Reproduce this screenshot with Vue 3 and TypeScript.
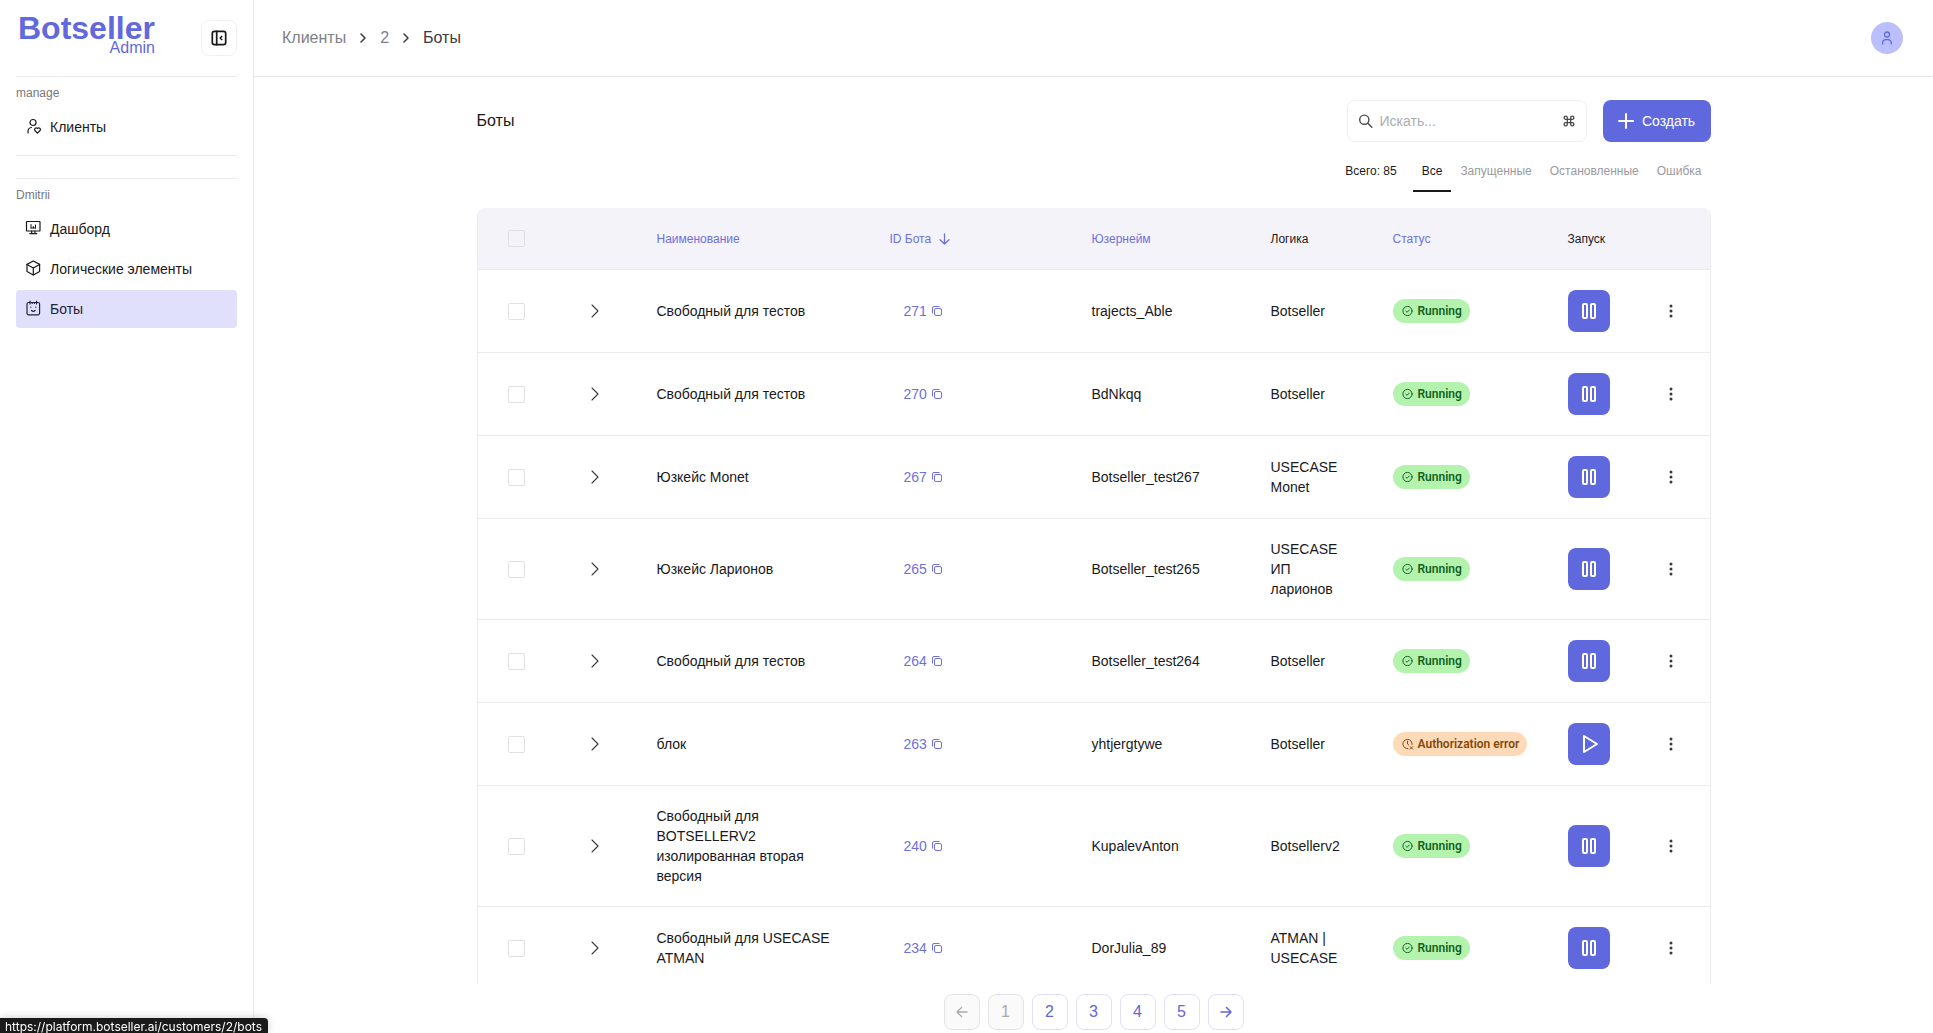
<script setup lang="ts">
import { ref } from 'vue'

interface Bot {
  id: number
  name: string
  username: string
  logic: string
  running: boolean
}

const bots: Bot[] = [
  { id: 271, name: 'Свободный для тестов', username: 'trajects_Able', logic: 'Botseller', running: true },
  { id: 270, name: 'Свободный для тестов', username: 'BdNkqq', logic: 'Botseller', running: true },
  { id: 267, name: 'Юзкейс Monet', username: 'Botseller_test267', logic: 'USECASE Monet', running: true },
  { id: 265, name: 'Юзкейс Ларионов', username: 'Botseller_test265', logic: 'USECASE ИП ларионов', running: true },
  { id: 264, name: 'Свободный для тестов', username: 'Botseller_test264', logic: 'Botseller', running: true },
  { id: 263, name: 'блок', username: 'yhtjergtywe', logic: 'Botseller', running: false },
  { id: 240, name: 'Свободный для BOTSELLERV2 изолированная вторая версия', username: 'KupalevAnton', logic: 'Botsellerv2', running: true },
  { id: 234, name: 'Свободный для USECASE ATMAN', username: 'DorJulia_89', logic: 'ATMAN | USECASE', running: true },
]

const filters = ['Все', 'Запущенные', 'Остановленные', 'Ошибка']
const activeFilter = ref('Все')
const query = ref('')
const page = ref(1)
const pages = [1, 2, 3, 4, 5]
</script>

<template>
  <div class="app">
    <aside class="sidebar">
      <div class="brand">
        <a class="logo" href="#">
          <span class="logo-name">Botseller</span>
          <span class="logo-sub">Admin</span>
        </a>
        <button class="collapse" type="button" aria-label="Свернуть меню">
          <svg width="18" height="18" viewBox="0 0 18 18" fill="none" stroke="currentColor" stroke-width="1.700" stroke-linecap="round" stroke-linejoin="round">
            <rect x="2.300" y="2.300" width="13.400" height="13.400" rx="2.200" />
            <path d="M6.700 2.300v13.400" />
            <path d="M11.700 7.500 10.200 9l1.500 1.500" />
          </svg>
        </button>
      </div>

      <nav class="group">
        <p class="group-label">manage</p>
        <a class="nav-item" href="#">
          <svg width="18" height="18" viewBox="0 0 18 18" fill="none" stroke="currentColor" stroke-width="1.200" stroke-linecap="round" stroke-linejoin="round">
            <circle cx="8" cy="4.500" r="3" />
            <path d="M3 15v-1.500a4 4 0 0 1 3.500-4" />
            <path d="M12.500 15.200 9.900 12.500a1.600 1.600 0 0 1 2.600-2 1.600 1.600 0 0 1 2.600 2z" />
          </svg>
          <span>Клиенты</span>
        </a>
      </nav>

      <nav class="group">
        <p class="group-label">Dmitrii</p>
        <a class="nav-item" href="#">
          <svg width="18" height="18" viewBox="0 0 18 18" fill="none" stroke="currentColor" stroke-width="1.200" stroke-linecap="round" stroke-linejoin="round">
            <rect x="1.500" y="1.500" width="13.500" height="9.500" rx="0.600" />
            <path d="M6.700 11v2.600M10 11v2.600M4.800 13.600h7" />
            <path d="M6 4.500v3.500M8.300 6.500v1.500M10.500 5v3M6 8h4.500" stroke-width="1" />
          </svg>
          <span>Дашборд</span>
        </a>
        <a class="nav-item" href="#">
          <svg width="18" height="18" viewBox="0 0 18 18" fill="none" stroke="currentColor" stroke-width="1.200" stroke-linecap="round" stroke-linejoin="round">
            <path d="M8.300 1 14.600 4.400v7L8.300 14.900 2 11.400v-7z" />
            <path d="M2 4.400l6.300 3.500 6.300-3.500M8.300 7.900v7" />
          </svg>
          <span>Логические элементы</span>
        </a>
        <a class="nav-item active" href="#" aria-current="page">
          <svg width="18" height="18" viewBox="0 0 18 18" fill="none" stroke="currentColor" stroke-width="1.200" stroke-linecap="round" stroke-linejoin="round">
            <rect x="2" y="2.500" width="12.600" height="12.300" rx="1.500" />
            <path d="M5 1v3M11.500 1v3M7.200 2.500v1M9.400 2.500v1" />
            <path d="M5.800 7.200h.1M10.700 7.200h.1M6.500 10.500q1.800 1.600 3.600 0" />
          </svg>
          <span>Боты</span>
        </a>
      </nav>
    </aside>

    <div class="main">
      <header class="topbar">
        <nav class="crumbs" aria-label="Навигация">
          <a href="#">Клиенты</a>
          <svg width="8" height="12" viewBox="0 0 8 12" fill="none" stroke="#3a3a3d" stroke-width="1.500" stroke-linecap="round" stroke-linejoin="round"><path d="M2 2l4 4-4 4" /></svg>
          <a href="#">2</a>
          <svg width="8" height="12" viewBox="0 0 8 12" fill="none" stroke="#3a3a3d" stroke-width="1.500" stroke-linecap="round" stroke-linejoin="round"><path d="M2 2l4 4-4 4" /></svg>
          <span class="current">Боты</span>
        </nav>
        <button class="avatar" type="button" aria-label="Профиль">
          <svg width="16" height="16" viewBox="0 0 16 16" fill="none" stroke="currentColor" stroke-width="1.300" stroke-linecap="round">
            <circle cx="8" cy="4.500" r="2.500" />
            <path d="M3.700 14v-1a3.300 3.300 0 0 1 3.300-3.300h2a3.300 3.300 0 0 1 3.300 3.300v1" />
          </svg>
        </button>
      </header>

      <main class="content">
        <div class="heading">
          <h1>Боты</h1>
          <div class="tools">
            <label class="search">
              <svg width="16" height="16" viewBox="0 0 16 16" fill="none" stroke="currentColor" stroke-width="1.400" stroke-linecap="round">
                <circle cx="6.300" cy="6.700" r="4.600" />
                <path d="M9.800 10.200 13.800 14.200" />
              </svg>
              <input v-model="query" type="text" placeholder="Искать..." aria-label="Искать" />
              <svg width="14" height="14" viewBox="0 0 14 14" fill="none" stroke="currentColor" stroke-width="1.300">
                <path d="M5.300 5.300H3.700A1.600 1.600 0 1 1 5.300 3.700V10.300A1.600 1.600 0 1 1 3.700 8.700H10.300A1.600 1.600 0 1 1 8.700 10.300V3.700A1.600 1.600 0 1 1 10.300 5.300H5.300" />
              </svg>
            </label>
            <button class="create" type="button">
              <svg width="16" height="16" viewBox="0 0 16 16" stroke="currentColor" stroke-width="2" stroke-linecap="round"><path d="M8 1v14M1 8h14" /></svg>
              <span>Создать</span>
            </button>
          </div>
        </div>

        <div class="filters">
          <span class="total">Всего: 85</span>
          <button
            v-for="filter in filters"
            :key="filter"
            type="button"
            class="tab"
            :class="{ active: filter === activeFilter }"
            @click="activeFilter = filter"
          >{{ filter }}</button>
        </div>

        <div class="table-wrap">
          <table>
            <colgroup>
              <col class="c-check" />
              <col class="c-expand" />
              <col class="c-name" />
              <col class="c-id" />
              <col class="c-user" />
              <col class="c-logic" />
              <col class="c-status" />
              <col class="c-launch" />
              <col class="c-menu" />
            </colgroup>
            <thead>
              <tr>
                <th class="mid"><input type="checkbox" aria-label="Выбрать все" /></th>
                <th></th>
                <th><button type="button" class="sort">Наименование</button></th>
                <th>
                  <button type="button" class="sort">
                    ID Бота
                    <svg width="12" height="12" viewBox="0 0 12 12" fill="none" stroke="currentColor" stroke-width="1.300" stroke-linecap="round" stroke-linejoin="round"><path d="M5.500 1v10M1 6.700 5.500 11 10 6.700" /></svg>
                  </button>
                </th>
                <th><button type="button" class="sort">Юзернейм</button></th>
                <th>Логика</th>
                <th><button type="button" class="sort">Статус</button></th>
                <th>Запуск</th>
                <th></th>
              </tr>
            </thead>
            <tbody>
              <tr v-for="bot in bots" :key="bot.id">
                <td class="mid"><input type="checkbox" :aria-label="'Выбрать ' + bot.id" /></td>
                <td class="mid">
                  <button type="button" class="plain" aria-label="Развернуть">
                    <svg width="10" height="16" viewBox="0 0 10 16" fill="none" stroke="currentColor" stroke-width="1.100" stroke-linecap="round" stroke-linejoin="round"><path d="M1 2l6 6-6 6" /></svg>
                  </button>
                </td>
                <td>{{ bot.name }}</td>
                <td class="id-cell">
                  <button type="button" class="copy">
                    {{ bot.id }}
                    <svg width="12" height="12" viewBox="0 0 12 12" fill="none" stroke="currentColor" stroke-width="1" stroke-linejoin="round">
                      <rect x="3.500" y="3.500" width="7" height="7" rx="1.500" />
                      <path d="M1.500 8.500V3a1.500 1.500 0 0 1 1.500-1.500h5.500" />
                    </svg>
                  </button>
                </td>
                <td>{{ bot.username }}</td>
                <td>{{ bot.logic }}</td>
                <td>
                  <span class="badge" :class="bot.running ? 'ok' : 'error'">
                    <svg v-if="bot.running" width="12" height="12" viewBox="0 0 12 12" fill="none" stroke="currentColor" stroke-width="1" stroke-linecap="round" stroke-linejoin="round">
                      <circle cx="5.500" cy="6" r="4.600" />
                      <path d="M3.900 6.200l1.200 1.100 2.200-2.300" />
                    </svg>
                    <svg v-else width="12" height="12" viewBox="0 0 12 12" fill="none" stroke="currentColor" stroke-width="1" stroke-linecap="round" stroke-linejoin="round">
                      <path d="M6 10.600A4.600 4.600 0 1 1 10.100 6.500M5.500 3.200V6l1.200 1" />
                      <path d="M8.200 8.700l2.400 2.400M10.600 8.700l-2.400 2.400" />
                    </svg>
                    {{ bot.running ? 'Running' : 'Authorization error' }}
                  </span>
                </td>
                <td>
                  <button type="button" class="launch" :aria-label="bot.running ? 'Пауза' : 'Запустить'">
                    <svg v-if="bot.running" width="18" height="18" viewBox="0 0 18 18" fill="none" stroke="currentColor" stroke-width="2">
                      <rect x="3" y="2" width="4" height="14" rx="1" />
                      <rect x="11" y="2" width="4" height="14" rx="1" />
                    </svg>
                    <svg v-else width="18" height="18" viewBox="0 0 18 18" fill="none" stroke="currentColor" stroke-width="2" stroke-linejoin="round"><path d="M4 1l13 8-13 8z" /></svg>
                  </button>
                </td>
                <td class="mid">
                  <button type="button" class="plain" aria-label="Действия">
                    <svg width="16" height="16" viewBox="0 0 16 16" fill="currentColor"><circle cx="9" cy="3" r="1.500" /><circle cx="9" cy="8" r="1.500" /><circle cx="9" cy="13" r="1.500" /></svg>
                  </button>
                </td>
              </tr>
            </tbody>
          </table>
        </div>

        <nav class="pagination" aria-label="Страницы">
          <button type="button" aria-label="Назад" :disabled="page === 1" @click="page--">
            <svg width="12" height="12" viewBox="0 0 12 12" fill="none" stroke="currentColor" stroke-width="1.300" stroke-linecap="round" stroke-linejoin="round"><path d="M11 6H1M5.500 1.500 1 6l4.500 4.500" /></svg>
          </button>
          <button v-for="n in pages" :key="n" type="button" :disabled="n === page" @click="page = n">{{ n }}</button>
          <button type="button" aria-label="Вперёд" :disabled="page === 5" @click="page++">
            <svg width="12" height="12" viewBox="0 0 12 12" fill="none" stroke="currentColor" stroke-width="1.500" stroke-linecap="round" stroke-linejoin="round"><path d="M1 6h10M6.500 1.500 11 6l-4.500 4.500" /></svg>
          </button>
        </nav>
      </main>
    </div>

    <div class="link-status">https://platform.botseller.ai/customers/2/bots</div>
  </div>
</template>

<style>
body {
  margin: 0;
  background: #fff;
}
</style>

<style scoped>
* {
  box-sizing: border-box;
}

.app {
  display: flex;
  height: 100vh;
  overflow: hidden;
  font-family: "Liberation Sans", Arial, sans-serif;
  font-size: 14px;
  line-height: 20px;
  color: #19191c;
}

svg {
  display: block;
  flex: none;
}

button {
  font: inherit;
  color: inherit;
  border: 0;
  padding: 0;
  background: none;
  cursor: pointer;
}

a {
  color: inherit;
  text-decoration: none;
}

.sidebar {
  flex: none;
  width: 254px;
  padding: 0 16px;
  border-right: 1px solid #e6e6e8;
}

.brand {
  display: flex;
  align-items: center;
  justify-content: space-between;
  height: 76px;
}

.logo {
  display: flex;
  flex-direction: column;
  align-items: flex-end;
  padding: 0 0 8px 2px;
  color: #6169dc;
}

.logo-name {
  font-size: 32px;
  font-weight: 700;
  line-height: 28px;
}

.logo-sub {
  font-size: 16px;
  line-height: 12px;
}

.collapse {
  display: grid;
  place-items: center;
  width: 36px;
  height: 36px;
  border: 1px solid #f0f0f2;
  border-radius: 8px;
}

.group {
  display: flex;
  flex-direction: column;
  gap: 2px;
  border-top: 1px solid #ebebed;
}

.group + .group {
  margin-top: 22px;
}

.group:not(:last-child) {
  padding-bottom: 9px;
  border-bottom: 1px solid #ebebed;
}

.group-label {
  margin: 0;
  padding: 8px 0 5px;
  font-size: 12px;
  line-height: 16px;
  color: #77777c;
}

.nav-item {
  display: flex;
  align-items: center;
  gap: 7px;
  height: 38px;
  padding: 0 9px;
  border-radius: 4px;
}

.nav-item.active {
  background: #e0e0fd;
  color: #23233c;
}

.main {
  flex: 1;
  min-width: 0;
  display: flex;
  flex-direction: column;
}

.topbar {
  flex: none;
  display: flex;
  align-items: center;
  justify-content: space-between;
  height: 77px;
  padding: 0 30px 0 28px;
  border-bottom: 1px solid #e6e6e8;
}

.crumbs {
  display: flex;
  align-items: center;
  gap: 13px;
  font-size: 16px;
  color: #808084;
}

.current {
  color: #3a3a3d;
}

.avatar {
  display: grid;
  place-items: center;
  width: 32px;
  height: 32px;
  border-radius: 50%;
  background: #bcbffe;
  color: #6169dc;
}

.content {
  flex: 1;
  min-height: 0;
  display: flex;
  flex-direction: column;
  width: 100%;
  max-width: 1234px;
  margin: 0 auto;
  padding-top: 23px;
}

.heading {
  display: flex;
  justify-content: space-between;
  align-items: center;
}

h1 {
  margin: 0;
  font-size: 16px;
  font-weight: 400;
}

.tools {
  display: flex;
  gap: 16px;
}

.search {
  display: flex;
  align-items: center;
  gap: 6px;
  width: 240px;
  height: 42px;
  padding: 0 10px;
  border: 1px solid #f0f0f2;
  border-radius: 8px;
  color: #4a4a4e;
}

.search input {
  flex: 1;
  min-width: 0;
  padding: 0;
  border: 0;
  outline: 0;
  background: none;
  font: inherit;
}

.search input::placeholder {
  color: #adadb1;
}

.create {
  display: flex;
  align-items: center;
  justify-content: center;
  gap: 8px;
  width: 108px;
  height: 42px;
  border-radius: 8px;
  background: #5f68dc;
  color: #fff;
}

.filters {
  display: flex;
  justify-content: flex-end;
  height: 50px;
  margin-bottom: 16px;
  font-size: 12px;
}

.total {
  padding-top: 19px;
  margin-right: 16px;
}

.tab {
  padding: 10px 9px 0;
  border-bottom: 2px solid transparent;
  color: #9a9a9e;
}

.tab.active {
  color: #19191c;
  border-color: #19191c;
}

.table-wrap {
  flex: 1;
  min-height: 0;
  overflow: auto;
  scrollbar-width: none;
  border: 1px solid #ebebed;
  border-width: 0 1px;
  border-radius: 8px 8px 0 0;
}

table {
  width: 100%;
  table-layout: fixed;
  border-collapse: separate;
  border-spacing: 0;
}

.c-check { width: 78px; }
.c-expand { width: 81px; }
.c-name { width: 233px; }
.c-id { width: 202px; }
.c-user { width: 179px; }
.c-logic { width: 122px; }
.c-status { width: 175px; }
.c-launch { width: 82px; }
.c-menu { width: 80px; }

th,
td {
  padding: 20px;
  text-align: left;
  font-weight: 400;
  border-bottom: 1px solid #ebebed;
}

th {
  height: 62px;
  font-size: 12px;
  background: #f5f3fa;
}

.sort {
  display: flex;
  align-items: center;
  gap: 8px;
  color: #6e70dc;
}

th:nth-child(8),
td:nth-child(8) {
  padding-right: 0;
}

.mid > * {
  display: block;
  margin: 0 auto;
}

input[type="checkbox"] {
  appearance: none;
  width: 17px;
  height: 17px;
  border: 1px solid #e0e0e4;
  border-radius: 2px;
}

.plain {
  color: #3a3a3d;
}

.id-cell {
  padding-left: 34px;
}

.copy {
  display: flex;
  align-items: center;
  gap: 4px;
  color: #6e70dc;
}

.badge {
  display: inline-flex;
  align-items: center;
  gap: 4px;
  height: 24px;
  padding: 0 8px 0 9px;
  border-radius: 12px;
  font-family: Roboto, sans-serif;
  font-size: 12px;
  font-weight: 600;
  white-space: nowrap;
  vertical-align: middle;
}

.ok {
  background: #b4f3ae;
  color: #126322;
}

.error {
  background: #ffdab8;
  color: #84490c;
}

.launch {
  display: grid;
  place-items: center;
  width: 42px;
  height: 42px;
  border-radius: 8px;
  background: #5f68dc;
  color: #fff;
}

.pagination {
  flex: none;
  display: flex;
  justify-content: center;
  gap: 8px;
  padding: 10px 0 3px;
}

.pagination button {
  display: grid;
  place-items: center;
  width: 36px;
  height: 36px;
  border: 1px solid #e0defa;
  border-radius: 8px;
  font-size: 16px;
  color: #6366d6;
}

.pagination button:disabled {
  border-color: #e4e4e6;
  background: #fafafa;
  color: #a9a9ad;
}

.link-status {
  position: fixed;
  left: 0;
  bottom: 0;
  height: 15px;
  padding: 2px 6px 0 5px;
  border-radius: 0 4px 0 0;
  background: #1b1b1c;
  color: #fff;
  font-family: Inter, sans-serif;
  font-size: 12px;
  line-height: 13px;
  box-shadow: 0 0 8px #0003;
}
</style>
